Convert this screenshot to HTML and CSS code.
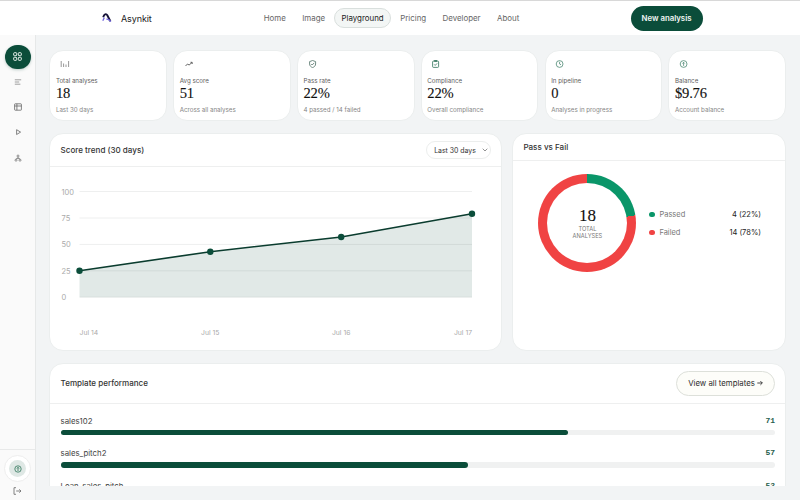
FILE: index.html
```html
<!DOCTYPE html>
<html lang="en">
<head>
<meta charset="utf-8">
<title>Asynkit</title>
<link rel="stylesheet" href="styles.css">
</head>
<body>
<header class="topbar">
  <div class="brand">
    <svg width="10" height="10" viewBox="0 0 10 10" fill="none"><path d="M1.2 4.2C2 1 4.2.3 5.3 2.2L8.4 8.2" stroke="#161338" stroke-width="1.9"/><path d="M.8 7.8 2.3 4.6M4.4 6.2l2 .2 2.6 2" stroke="#7468dc" stroke-width="1.3"/></svg>
    <span>Asynkit</span>
  </div>
  <nav class="nav">
    <a>Home</a><a>Image</a><a class="active">Playground</a><a>Pricing</a><a>Developer</a><a>About</a>
  </nav>
  <button class="primary">New analysis</button>
</header>
<div class="shell">
  <aside class="sidebar">
    <div class="side-nav">
      <a class="side-item current"><svg width="9" height="9" viewBox="0 0 9 9" fill="none" stroke="#e6f1ec" stroke-width="1"><rect x=".7" y=".7" width="3" height="3" rx=".7"/><rect x="5.3" y=".7" width="3" height="3" rx=".7"/><rect x=".7" y="5.3" width="3" height="3" rx=".7"/><rect x="5.3" y="5.3" width="3" height="3" rx=".7"/></svg></a>
      <a class="side-item"><svg width="8" height="8" viewBox="0 0 8 8" stroke="#888" stroke-width=".8"><path d="M.8 1.8h6.4M.8 4h4.4M.8 6.2h5.6"/></svg></a>
      <a class="side-item"><svg width="8" height="8" viewBox="0 0 8 8" fill="none" stroke="#666" stroke-width=".8"><rect x=".6" y=".8" width="6.8" height="6.4" rx=".6"/><path d="M.6 3h6.8M2.9.8v6.4"/></svg></a>
      <a class="side-item"><svg width="8" height="8" viewBox="0 0 8 8" fill="none" stroke="#666" stroke-width=".8"><path d="M2.6 1.7v4.8l4-2.4z" stroke-linejoin="round"/></svg></a>
      <a class="side-item"><svg width="8" height="8" viewBox="0 0 8 8" fill="none" stroke="#777" stroke-width=".8"><circle cx="4" cy="2" r="1"/><circle cx="2" cy="6.2" r="1"/><circle cx="6" cy="6.2" r="1"/><path d="M4 3v1.5M2 5.2l.5-.8h3l.5.8"/></svg></a>
    </div>
    <div class="side-foot">
      <span class="wallet"><span class="wallet-core"><svg width="8" height="8" viewBox="0 0 8 8" fill="none" stroke="#30765b" stroke-width=".8"><circle cx="4" cy="4" r="3.2"/><path d="M4 6V2.4M2.9 3.5 4 2.3l1.1 1.2"/></svg></span></span>
      <svg width="9" height="8" viewBox="0 0 9 8" fill="none" stroke="#777" stroke-width=".9"><path d="M3 .7H1v6.6h2M3.2 4H8M6.3 2.3 8 4 6.3 5.7"/></svg>
    </div>
  </aside>
  <main class="content">
    <section class="stats">
      <article class="card stat"><svg width="10" height="8" viewBox="0 0 10 8" stroke="#8b8b8b" stroke-width=".9"><path d="M1.2 1v6M3.6 3.5V7M6 4.5V7M8.6 1v6"/></svg><h3>Total analyses</h3><strong>18</strong><p>Last 30 days</p></article>
      <article class="card stat"><svg width="10" height="8" viewBox="0 0 10 8" fill="none" stroke="#555" stroke-width=".9"><path d="M1.5 6 3.5 4l1.6 1L8 2.5M6.5 2.3h1.7V4"/></svg><h3>Avg score</h3><strong>51</strong><p>Across all analyses</p></article>
      <article class="card stat"><svg width="10" height="8" viewBox="0 0 10 8" fill="none" stroke="#4c6e63" stroke-width=".8"><path d="M4.6.5 7.6 1.6V4c0 1.8-1.4 3-3 3.6-1.6-.6-3-1.8-3-3.6V1.6zM3.2 4l1 1 2-2.1"/></svg><h3>Pass rate</h3><strong>22%</strong><p>4 passed / 14 failed</p></article>
      <article class="card stat"><svg width="10" height="8" viewBox="0 0 10 8" fill="none" stroke="#2f7259" stroke-width=".8"><rect x="1.6" y="1.1" width="6" height="6.3" rx=".9"/><path d="M3.3 1.1V.5h2.6v.9H3.3M3.2 4.4l1 1 1.9-2"/></svg><h3>Compliance</h3><strong>22%</strong><p>Overall compliance</p></article>
      <article class="card stat"><svg width="10" height="8" viewBox="0 0 10 8" fill="none" stroke="#4f8a75" stroke-width=".8"><circle cx="4.6" cy="4" r="3.4"/><path d="M4.6 1.8V4l1.4.8"/></svg><h3>In pipeline</h3><strong>0</strong><p>Analyses in progress</p></article>
      <article class="card stat"><svg width="10" height="8" viewBox="0 0 10 8" fill="none" stroke="#4f8a75" stroke-width=".8"><circle cx="4.6" cy="4" r="3.4"/><path d="M4.6 5.9V2.4M3.5 3.5l1.1-1.2 1.1 1.2"/></svg><h3>Balance</h3><strong>$9.76</strong><p>Account balance</p></article>
    </section>
    <section class="row">
      <article class="card trend">
        <header class="card-head"><h2>Score trend (30 days)</h2><span class="select">Last 30 days<svg width="6" height="4" viewBox="0 0 6 4" fill="none" stroke="#777" stroke-width=".8"><path d="M.7.7 3 3 5.3.7"/></svg></span></header>
        <svg class="chart" width="451" height="182" viewBox="50 167 451 182">
          <g class="grid"><path d="M79.5 191.5H472M79.5 218H472M79.5 244.4H472M79.5 270.8H472M79.5 297.2H472"/></g>
          <path class="area" d="M79.5 270.7 210.3 251.7 341.2 237 472 213.7V297.2H79.5z"/>
          <path class="line" d="M79.5 270.7 210.3 251.7 341.2 237 472 213.7"/>
          <g class="dots"><circle cx="79.5" cy="270.7" r="3.2"/><circle cx="210.3" cy="251.7" r="3.2"/><circle cx="341.2" cy="237" r="3.2"/><circle cx="472" cy="213.7" r="3.2"/></g>
          <g class="ylab"><text x="61.5" y="194.5">100</text><text x="61.5" y="221">75</text><text x="61.5" y="247.4">50</text><text x="61.5" y="273.8">25</text><text x="61.5" y="300.2">0</text></g>
          <g class="xlab"><text x="79.5" y="335">Jul 14</text><text x="210.3" y="335" text-anchor="middle">Jul 15</text><text x="341.2" y="335" text-anchor="middle">Jul 16</text><text x="472" y="335" text-anchor="end">Jul 17</text></g>
        </svg>
      </article>
      <article class="card passfail">
        <header class="card-head"><h2>Pass vs Fail</h2></header>
        <div class="pf-body">
          <div class="donut"><div class="hole"><strong>18</strong><span>TOTAL</span><span>ANALYSES</span></div></div>
          <ul class="legend">
            <li><i class="dot pass"></i><span>Passed</span><b>4 (22%)</b></li>
            <li><i class="dot fail"></i><span>Failed</span><b>14 (78%)</b></li>
          </ul>
        </div>
      </article>
    </section>
    <section class="card templates">
      <header class="card-head"><h2>Template performance</h2><button class="ghost">View all templates <svg width="6" height="6" viewBox="0 0 6 6" fill="none" stroke="#333" stroke-width=".9"><path d="M.3 3h5M3.4 1.1 5.3 3 3.4 4.9"/></svg></button></header>
      <div class="tlist">
        <div class="titem"><div class="tline"><span>sales102</span><b>71</b></div><div class="track"><div class="fill" style="width:71%"></div></div></div>
        <div class="titem"><div class="tline"><span>sales_pitch2</span><b>57</b></div><div class="track"><div class="fill" style="width:57%"></div></div></div>
        <div class="titem"><div class="tline"><span>Loan_sales_pitch</span><b>52</b></div><div class="track"><div class="fill" style="width:52%"></div></div></div>
      </div>
    </section>
  </main>
</div>
</body>
</html>
```
FILE: styles.css
```css
* { box-sizing: border-box; margin: 0; padding: 0; }
body { width: 800px; height: 500px; overflow: hidden; background: #f2f4f5; font-family: Inter, "Open Sans", sans-serif; color: #2b2b2b; }
button { font-family: inherit; }
svg { display: block; flex: none; }
.topbar { height: 35px; background: #fff; border-top: 1px solid #d8d8d8; display: flex; align-items: center; padding-left: 102px; }
.brand { display: flex; align-items: center; gap: 9px; width: 153.5px; font-size: 9px; font-weight: 400; letter-spacing: -.1px; color: #222; }
.nav { display: flex; align-items: center; font-size: 7.9px; color: #666; width: 375px; }
.nav a { padding: 0 8.2px; }
.nav a.active { height: 19.5px; line-height: 18.5px; padding: 0 6.3px; margin: 0 1px; border: 1px solid #d9dfdd; border-radius: 10px; background: #f3f6f5; color: #222; }
.primary { width: 72px; height: 25px; border: 0; border-radius: 13px; background: #0b4d3a; color: #f1f6f4; font-size: 7.8px; font-weight: 600; }
.shell { display: flex; height: 465px; }
.sidebar { width: 36px; background: #fafafa; border-right: 1px solid #e6e8e8; display: flex; flex-direction: column; justify-content: space-between; }
.side-nav { padding-top: 9.5px; display: flex; flex-direction: column; align-items: center; }
.side-item { height: 25.4px; display: flex; align-items: center; justify-content: center; }
.side-item.current { width: 26px; height: 24px; margin-bottom: .5px; border-radius: 12px; background: #0b4d3a; box-shadow: 0 1px 3px #0b4d3a40; }
.side-foot { height: 51px; border-top: 1px solid #e8e9e9; padding-top: 5px; display: flex; flex-direction: column; align-items: center; gap: 5px; }
.wallet { width: 27px; height: 27px; border-radius: 50%; background: #fff; border: 1px solid #eee; display: flex; align-items: center; justify-content: center; }
.wallet-core { width: 17px; height: 17px; border-radius: 50%; background: #dfe8e5; display: flex; align-items: center; justify-content: center; }
.content { flex: 1; height: 451px; overflow: hidden; padding: 15px 14px 0 13.4px; }
.card { background: #fff; border-radius: 14px; border: 1px solid #ebeeee; }
.stats { display: grid; grid-template-columns: repeat(6, 1fr); gap: 6.3px; height: 71px; }
.stat { padding: 9.2px 6px 0 5.5px; white-space: nowrap; }
.stat svg { margin-left: 4px; }
.stat h3 { margin-top: 8.3px; height: 9px; line-height: 9px; font-size: 6.2px; font-weight: 400; color: #5d5d5d; }
.stat strong { display: block; height: 17.5px; font: 400 14.6px/17.5px "Liberation Serif", serif; letter-spacing: -.2px; color: #111; -webkit-text-stroke: .12px #111; }
.stat p { line-height: 9px; margin-top: 2px; font-size: 6.2px; color: #858585; }
.row { display: grid; grid-template-columns: 453px 1fr; gap: 10px; margin-top: 12px; height: 218px; }
.card-head { display: flex; align-items: center; justify-content: space-between; border-bottom: 1px solid #eeefef; }
.card-head h2 { font-size: 8.05px; font-weight: 450; color: #333; white-space: nowrap; }
.trend .card-head { height: 33px; padding: 0 10.2px; }
.select { width: 65px; height: 18.5px; padding: 0 2px 0 7px; border: 1px solid #eceeed; border-radius: 10px; display: flex; align-items: center; justify-content: space-between; font-size: 6.9px; color: #333; white-space: nowrap; }
.grid { stroke: #eeefef; stroke-width: 1; }
.area { fill: #0b4d3a; fill-opacity: .12; }
.line { fill: none; stroke: #0a3c2e; stroke-width: 1.6; }
.dots { fill: #0b4d3a; }
.ylab { font-size: 7.5px; fill: #aaa; }
.xlab { font-size: 6.8px; fill: #aaa; }
.passfail .card-head { height: 27px; padding: 0 10px; }
.pf-body { display: flex; align-items: center; padding: 13.5px 24px 0 25px; height: 111px; }
.donut { width: 98px; height: 98px; border-radius: 50%; background: conic-gradient(#0a9669 0 22.5%, #f04343 22.5%); display: flex; align-items: center; justify-content: center; }
.hole { width: 80px; height: 80px; border-radius: 50%; background: #fff; display: flex; flex-direction: column; align-items: center; justify-content: center; font-size: 5.7px; line-height: 7.2px; color: #777; }
.hole strong { font: 400 17px/18px "Liberation Serif", serif; color: #111; -webkit-text-stroke: .12px #111; }
.legend { flex: 1; margin-left: 13px; list-style: none; font-size: 7.5px; }
.legend li { height: 18px; display: flex; align-items: center; color: #777; }
.legend b { margin-left: auto; font-weight: 400; color: #222; }
.dot { width: 5.5px; height: 5.5px; border-radius: 50%; margin-right: 4.5px; }
.pass { background: #0a9669; }
.fail { background: #f04343; }
.templates { margin-top: 12px; height: 160px; }
.templates .card-head { height: 39.5px; padding: 0 10px 0 10.2px; }
.ghost { width: 99px; height: 25px; border: 1px solid #dde0da; border-radius: 13px; background: #fdfdf9; font-size: 7.8px; color: #2b2b2b; display: flex; align-items: center; justify-content: center; gap: 2px; white-space: nowrap; }
.tlist { padding: 11.2px 10px 0 10.2px; }
.titem { height: 32.5px; }
.tline { display: flex; justify-content: space-between; height: 12px; line-height: 12px; font-size: 7.8px; color: #444; }
.tline b { font: 600 8px/12px "Liberation Mono", monospace; letter-spacing: -.1px; color: #285e4d; }
.track { height: 5.5px; margin-top: 3.3px; border-radius: 3px; background: #f0f1f1; }
.fill { height: 5.5px; border-radius: 3px; background: #0b4d3a; }
```
